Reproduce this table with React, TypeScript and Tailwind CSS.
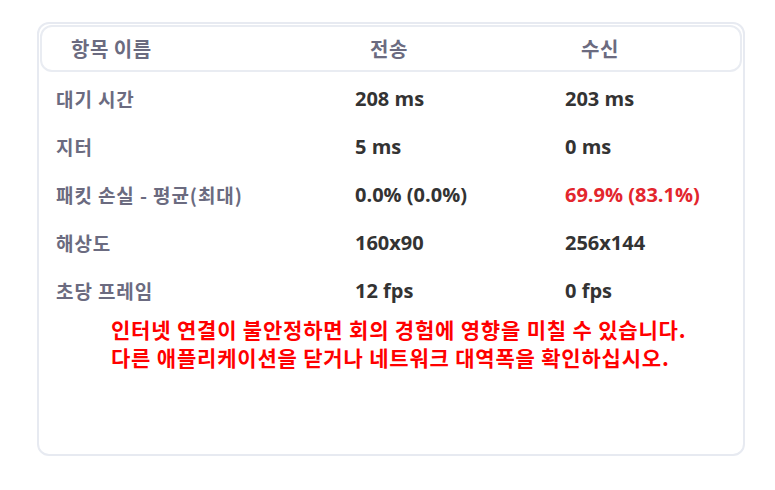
const rows = [
  { label: "대기 시간", send: "208 ms", recv: "203 ms", bad: false },
  { label: "지터", send: "5 ms", recv: "0 ms", bad: false },
  { label: "패킷 손실 - 평균(최대)", send: "0.0% (0.0%)", recv: "69.9% (83.1%)", bad: true },
  { label: "해상도", send: "160x90", recv: "256x144", bad: false },
  { label: "초당 프레임", send: "12 fps", recv: "0 fps", bad: false },
];

const font = { fontFamily: '"Noto Sans CJK KR", "Open Sans", sans-serif' };
const numFont = { fontFamily: '"Open Sans", "Noto Sans CJK KR", sans-serif' };

export default function App() {
  return (
    <div className="w-[775px] h-[490px] bg-white pl-[37px] pt-[22px]" style={font}>
      <div className="w-[708px] h-[434px] rounded-[12px] border-2 border-[#e7eaf1] p-px">
        {/* Header */}
        <div className="grid grid-cols-[299px_211px_1fr] items-center h-[47px] rounded-[12px] border-2 border-[#e9ecf2] pl-[29px] text-[20px] font-bold text-[#6b6b80]">
          <span className="tracking-[0.5px]">항목 이름</span>
          <span className="tracking-[0.5px]">전송</span>
          <span className="tracking-[0.5px]">수신</span>
        </div>

        {/* Stats */}
        <div className="pl-[16px] pt-[3px]">
          {rows.map((row) => (
            <div
              key={row.label}
              className="grid grid-cols-[299px_210px_1fr] items-center h-[48px] font-bold"
            >
              <span className="text-[19px] tracking-[0.9px] text-[#6b6b80]">{row.label}</span>
              <span className="text-[20px] text-[#333333]" style={numFont}>
                {row.send}
              </span>
              <span
                className={`text-[20px] ${row.bad ? "text-[#e3262d]" : "text-[#333333]"}`}
                style={numFont}
              >
                {row.recv}
              </span>
            </div>
          ))}
        </div>

        {/* Warning */}
        <div className="pl-[71px] text-[21px] leading-[28px] tracking-[0.8px] font-bold text-[#ff0000]">
          <p>인터넷 연결이 불안정하면 회의 경험에 영향을 미칠 수 있습니다.</p>
          <p>다른 애플리케이션을 닫거나 네트워크 대역폭을 확인하십시오.</p>
        </div>
      </div>
    </div>
  );
}
